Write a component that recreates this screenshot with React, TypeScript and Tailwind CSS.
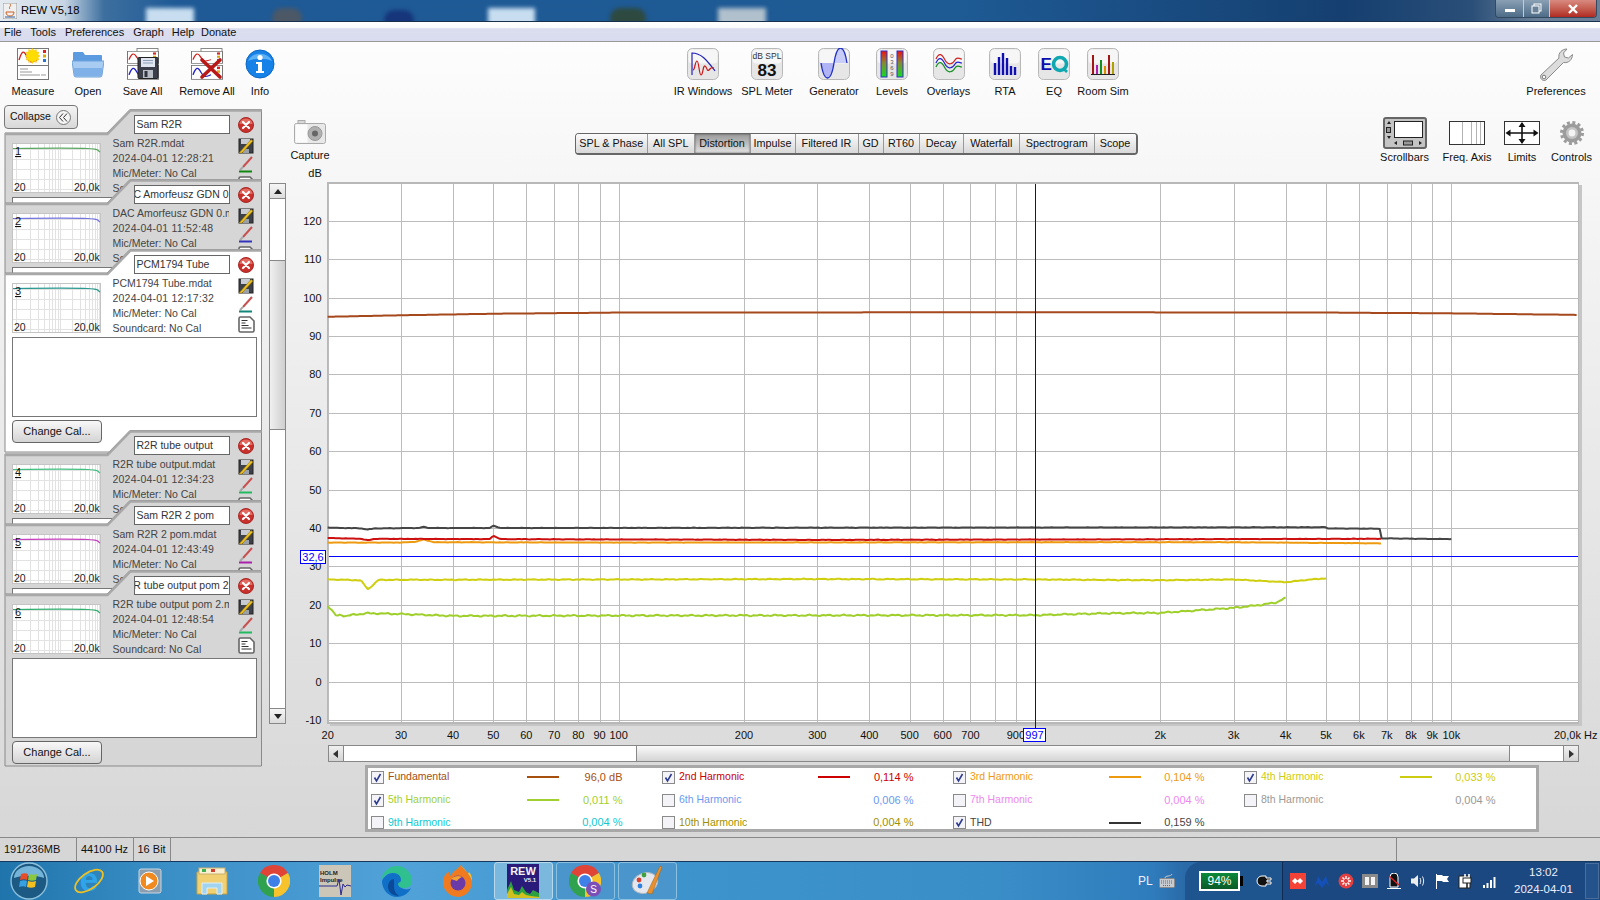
import { ReactNode } from "react";

const fx = (f: number) => 327.7 + 416.3 * Math.log10(f / 20);
const dy = (db: number) => 681.6 - 3.84 * db;

// frequency response style line with a small ripple so it does not look ruled
function curve(points: number[][], amp: number, seed: number) {
  const out: string[] = [];
  const x0 = fx(points[0][0]);
  const x1 = fx(points[points.length - 1][0]);
  let i = 0;
  for (let x = x0; x < x1; x += 2) {
    const f = 20 * Math.pow(10, (x - 327.7) / 416.3);
    while (i < points.length - 2 && points[i + 1][0] < f) i++;
    const [fa, da] = points[i];
    const [fb, db] = points[i + 1];
    const t = Math.min(1, Math.max(0, Math.log(f / fa) / Math.log(fb / fa)));
    const ripple = amp * (Math.sin(x * 0.37 + seed) + Math.sin(x * 0.91 + seed * 2)) * 0.5;
    out.push(`${x.toFixed(1)},${dy(da + (db - da) * t + ripple).toFixed(1)}`);
  }
  out.push(`${x1.toFixed(1)},${dy(points[points.length - 1][1]).toFixed(1)}`);
  return out.join(" ");
}

const traces = [
  { color: "#a5481c", amp: 0, points: [[20, 95], [30, 95.4], [50, 95.8], [100, 96.1], [1000, 96.2], [5000, 96.1], [10000, 95.9], [20000, 95.5]] },
  { color: "#9fcf2b", amp: 0.22, points: [[20, 19.8], [21, 17], [21.5, 17.5], [22, 17], [23, 17.4], [25, 17.8], [30, 17.6], [40, 17.1], [100, 17.2], [1000, 17.3], [1500, 17.8], [2000, 17.9], [3000, 19.2], [3500, 20], [3800, 20.6], [4000, 21.9]] },
  { color: "#cfcf10", amp: 0.12, points: [[20, 26.6], [24, 26.4], [25, 24], [26.5, 26.5], [100, 26.6], [300, 26.7], [1000, 26.6], [2000, 26.4], [3000, 26.6], [4000, 25.9], [4500, 26.5], [5000, 26.9]] },
  { color: "#ee9a10", amp: 0.04, points: [[20, 36.2], [30, 36.2], [32.5, 36.4], [34, 37], [36, 36.3], [100, 36.2], [1000, 36.3], [3000, 36.3], [6780, 36]] },
  { color: "#cc1010", amp: 0.05, points: [[20, 37.4], [24, 37.2], [25, 36.8], [26, 37.2], [49, 37.1], [50, 38], [52, 37.1], [300, 36.9], [1000, 37], [6780, 37.2]] },
  { color: "#454545", amp: 0.05, points: [[20, 40.1], [24, 39.9], [25, 39.6], [26, 39.9], [33, 40], [34, 40.3], [35, 40], [49, 40], [50, 40.6], [52, 40], [5000, 40.2], [5010, 39.9], [6730, 39.8], [6780, 37.3], [10000, 37.1]] },
];

const gridFreqs = [20, 30, 40, 50, 60, 70, 80, 90, 100, 200, 300, 400, 500, 600, 700, 800, 900, 1000, 2000, 3000, 4000, 5000, 6000, 7000, 8000, 9000, 10000];
const freqLabels: [number, string][] = [
  [20, "20"], [30, "30"], [40, "40"], [50, "50"], [60, "60"], [70, "70"], [80, "80"], [90, "90"], [100, "100"],
  [200, "200"], [300, "300"], [400, "400"], [500, "500"], [600, "600"], [700, "700"], [900, "900"],
  [2000, "2k"], [3000, "3k"], [4000, "4k"], [5000, "5k"], [6000, "6k"], [7000, "7k"], [8000, "8k"], [9000, "9k"], [10000, "10k"],
];
const dbTicks = [120, 110, 100, 90, 80, 70, 60, 50, 40, 30, 20, 10, 0, -10];

function Chart() {
  return (
    <svg width={1310} height={580} viewBox="290 165 1310 580" className="block shrink-0 text-[11px]">
      <rect x={330} y={185} width={1252} height={541} fill="#c6c6c6" />
      <rect x={327} y={182} width={1252} height={542} fill="#b8b8b8" />
      <rect x={329} y={184} width={1249} height={538} fill="#ffffff" />
      {dbTicks.map((d) => (
        <g key={d}>
          <line x1={329} x2={1578} y1={Math.round(dy(d)) + 0.5} y2={Math.round(dy(d)) + 0.5} stroke="#bcbcbc" />
          <text x={321.5} y={dy(d) + 4} textAnchor="end" fill="#111">{d}</text>
        </g>
      ))}
      {gridFreqs.map((f) => (
        <line key={f} x1={Math.round(fx(f)) + 0.5} x2={Math.round(fx(f)) + 0.5} y1={184} y2={722} stroke="#bcbcbc" />
      ))}
      <text x={315} y={177} textAnchor="middle" fill="#111">dB</text>
      {freqLabels.map(([f, t]) => (
        <text key={f} x={fx(f)} y={739} textAnchor="middle" fill="#111">{t}</text>
      ))}
      <text x={1554} y={739} fill="#111">20,0k</text>
      <text x={1584} y={739} fill="#111">Hz</text>
      {traces.map((t) => (
        <polyline key={t.color} points={curve(t.points, t.amp, t.points.length)} fill="none" stroke={t.color} strokeWidth={2} strokeLinejoin="round" />
      ))}
      <line x1={329} x2={1578} y1={556.5} y2={556.5} stroke="#0000ff" />
      <line x1={1035.5} x2={1035.5} y1={184} y2={728} stroke="#0000ff" />
      <rect x={300.5} y={550.5} width={25} height={13} fill="#fff" stroke="#0000ff" />
      <text x={313} y={561} textAnchor="middle" fill="#0000ff">32,6</text>
      <rect x={1023.5} y={728.5} width={22} height={13} fill="#fff" stroke="#0000ff" />
      <text x={1034.5} y={739} textAnchor="middle" fill="#0000ff">997</text>
    </svg>
  );
}

function IconFrame({ children }: { children: ReactNode }) {
  return (
    <svg width={32} height={32} viewBox="0 0 32 32">
      <rect x={0.5} y={0.5} width={31} height={31} rx={5} fill="#e6e6e6" stroke="#b8b8b8" />
      <rect x={1.5} y={1.5} width={29} height={14} rx={4} fill="#f6f6f6" />
      {children}
    </svg>
  );
}

function MiniSheet({ stroke }: { stroke: string }) {
  return (
    <g>
      <rect x={0.5} y={0.5} width={31} height={17} fill="#fff" stroke="#777" />
      <path d="M2 12 C5 2 7 2 10 9 S15 14 20 12" fill="none" stroke={stroke} strokeWidth={1.4} />
      <rect x={26} y={2} width={3} height={3} fill="#d22" />
      <rect x={26} y={6.5} width={3} height={3} fill="#da0" />
      <rect x={26} y={11} width={3} height={3} fill="#27c" />
    </g>
  );
}

function burst(cx: number, cy: number, r1: number, r2: number, n: number) {
  const pts: string[] = [];
  for (let i = 0; i < n * 2; i++) {
    const r = i % 2 ? r2 : r1;
    const a = (i * Math.PI) / n;
    pts.push(`${(cx + r * Math.sin(a)).toFixed(1)},${(cy - r * Math.cos(a)).toFixed(1)}`);
  }
  return pts.join(" ");
}

function MeasureIcon() {
  return (
    <svg width={32} height={32} viewBox="0 0 32 32">
      <MiniSheet stroke="#d02020" />
      <rect x={0.5} y={17.5} width={31} height={14} fill="#fff" stroke="#777" />
      <path d="M3 21h8M3 24h12M3 27h20M24 27h5" stroke="#999" />
      <polygon points={burst(15.5, 8, 7.5, 5.5, 12)} fill="#ffdd00" stroke="#f4c000" strokeWidth={0.5} />
    </svg>
  );
}

function OpenIcon() {
  return (
    <svg width={32} height={32} viewBox="0 0 32 32">
      <path d="M1 8V5a1 1 0 0 1 1-1h9l2 3h16a1 1 0 0 1 1 1v6H1z" fill="#5d9be0" />
      <path d="M0 13h32l-2 14a2 2 0 0 1-2 2H4a2 2 0 0 1-2-2z" fill="#a9cdf2" stroke="#6fa3da" />
      <rect x={2} y={20} width={28} height={8} fill="#7fb0e8" />
    </svg>
  );
}

function SaveAllIcon() {
  return (
    <svg width={32} height={32} viewBox="0 0 32 32">
      <rect x={10} y={0.5} width={21} height={10} fill="#fff" stroke="#888" />
      <g transform="translate(0 3) scale(1 .72)">
        <MiniSheet stroke="#d02020" />
      </g>
      <g transform="translate(0 17) scale(1 .82)">
        <MiniSheet stroke="#2020c0" />
      </g>
      <rect x={11} y={9.5} width={20} height={21} rx={1} fill="#3a3f4a" stroke="#222" />
      <rect x={14} y={10} width={14} height={9} fill="#dfe6ef" />
      <path d="M16 12.5h10M16 15h10" stroke="#8da0b8" />
      <rect x={16} y={22} width={10} height={8} fill="#b9bec6" />
      <rect x={17.5} y={23} width={3} height={6} fill="#30343c" />
    </svg>
  );
}

function RemoveAllIcon() {
  return (
    <svg width={32} height={32} viewBox="0 0 32 32">
      <rect x={10} y={0.5} width={21} height={10} fill="#fff" stroke="#888" />
      <g transform="translate(0 3) scale(1 .72)">
        <MiniSheet stroke="#d02020" />
      </g>
      <g transform="translate(0 17) scale(1 .82)">
        <MiniSheet stroke="#2020c0" />
      </g>
      <path d="M11 12l18 17M29 12L11 29" stroke="#b81818" strokeWidth={3.6} strokeLinecap="round" />
    </svg>
  );
}

function InfoIcon() {
  return (
    <svg width={30} height={30} viewBox="0 0 30 30">
      <circle cx={15} cy={15} r={14} fill="#1682e8" stroke="#0d68c4" />
      <path d="M3 12a12.5 10 0 0 1 24 0c-6-3-18-3-24 0z" fill="#5cb0f5" />
      <circle cx={15} cy={8.5} r={2.6} fill="#fff" />
      <path d="M11 13h6v9h2v2h-8v-2h2v-7h-2z" fill="#fff" />
    </svg>
  );
}

function IrIcon() {
  return (
    <IconFrame>
      <path d="M5 27V5c10 0 16 9 23 18" fill="none" stroke="#2222bb" strokeWidth={1.2} />
      <path d="M6 22c2 0 2-9 4-9s2 14 4 14 2-10 4-9 2 6 4 4 2-3 5-2" fill="none" stroke="#c81818" strokeWidth={1.2} />
    </IconFrame>
  );
}

function SplIcon() {
  return (
    <IconFrame>
      <text x={16} y={11} textAnchor="middle" className="text-[8.5px]" fill="#333">dB SPL</text>
      <text x={16} y={28} textAnchor="middle" className="text-[17px] font-bold" fill="#111">83</text>
    </IconFrame>
  );
}

function GeneratorIcon() {
  return (
    <IconFrame>
      <path d="M3 15c3 20 10 20 13 0z" fill="#b0b4f4" />
      <path d="M16 15c3-20 10-20 13 0z" fill="#c8ccf8" />
      <path d="M3 15c3 20 10 20 13 0s10-20 13 0" fill="none" stroke="#2030c0" strokeWidth={1.3} />
    </IconFrame>
  );
}

function LevelsIcon() {
  return (
    <IconFrame>
      <defs>
        <linearGradient id="lv" x1="0" y1="0" x2="0" y2="1">
          <stop offset="0" stopColor="#ee1111" />
          <stop offset="0.45" stopColor="#888833" />
          <stop offset="1" stopColor="#11dd22" />
        </linearGradient>
      </defs>
      <rect x={5} y={3} width={6} height={26} fill="url(#lv)" stroke="#3030c0" />
      <rect x={21} y={3} width={6} height={26} fill="url(#lv)" stroke="#3030c0" />
      <text x={16} y={10} textAnchor="middle" className="text-[6px]" fill="#555">0</text>
      <text x={16} y={16} textAnchor="middle" className="text-[6px]" fill="#555">3</text>
      <text x={16} y={22} textAnchor="middle" className="text-[6px]" fill="#555">6</text>
      <text x={16} y={28} textAnchor="middle" className="text-[6px]" fill="#555">9</text>
    </IconFrame>
  );
}

function OverlaysIcon() {
  return (
    <IconFrame>
      <path d="M3 11c3-7 6-5 9 1s8 4 10 0 4-1 7-1" fill="none" stroke="#d02020" strokeWidth={1.2} />
      <path d="M3 15c3-7 6-5 9 1s8 4 10 0 4-1 7-1" fill="none" stroke="#2020d0" strokeWidth={1.2} />
      <path d="M3 19c3-7 6-5 9 1s8 4 10 0 4-1 7-1" fill="none" stroke="#109020" strokeWidth={1.2} />
    </IconFrame>
  );
}

function RtaIcon() {
  return (
    <IconFrame>
      <path d="M6 27V15M10 27V9M14 27V5M18 27V10M22 27V18M26 27V19" stroke="#1010b0" strokeWidth={2.4} />
    </IconFrame>
  );
}

function EqIcon() {
  return (
    <IconFrame>
      <text x={2.5} y={22} className="text-[17px] font-bold" fill="#0a10b0">E</text>
      <circle cx={22} cy={16} r={6.5} fill="none" stroke="#10a8b0" strokeWidth={3.6} />
      <path d="M25 20l4 4" stroke="#10a8b0" strokeWidth={2.6} />
    </IconFrame>
  );
}

function RoomSimIcon() {
  return (
    <IconFrame>
      <path d="M6 26V7" stroke="#a01515" strokeWidth={2} />
      <path d="M10 26V17" stroke="#b020b0" strokeWidth={2} />
      <path d="M14 26V12" stroke="#109020" strokeWidth={2} />
      <path d="M18 26V18" stroke="#d89000" strokeWidth={2} />
      <path d="M22 26V7" stroke="#a01515" strokeWidth={2} />
      <path d="M26 26V14" stroke="#b0a000" strokeWidth={2} />
      <path d="M4 26.5h24" stroke="#222" />
    </IconFrame>
  );
}

function WrenchIcon() {
  return (
    <svg width={34} height={33} viewBox="0 0 34 33">
      <path d="M2 27L20 10c-1-5 3-9 8-9l-3.5 4 1 4 4 1 4-3.5c0 5-4 9-9 8L7 32c-3 2-7-2-5-5z" fill="#dcdcdc" stroke="#8a8a8a" />
      <circle cx={5} cy={29} r={1.8} fill="#fff" stroke="#777" />
    </svg>
  );
}

function ScrollbarsIcon() {
  return (
    <svg width={44} height={32} viewBox="0 0 44 32">
      <rect x={1} y={1} width={42} height={30} rx={2} fill="#c4c4c4" stroke="#666" strokeWidth={2} />
      <rect x={11.5} y={4.5} width={28} height={16} fill="#fff" stroke="#222" />
      <path d="M4 7l2-3 2 3zM4 19l2 3 2-3z" fill="#222" />
      <rect x={3.5} y={10.5} width={4} height={5} fill="#999" stroke="#222" />
      <path d="M14 24l-3 2 3 2zM36 24l3 2-3 2z" fill="#222" />
      <rect x={20.5} y={24} width={9} height={4} fill="#999" stroke="#222" />
    </svg>
  );
}

function FreqAxisIcon() {
  return (
    <svg width={36} height={24} viewBox="0 0 36 24">
      <rect x={0.5} y={0.5} width={35} height={23} fill="#fff" stroke="#333" />
      <path d="M13.5 1v22M22.5 1v22M27.5 1v22M31.5 1v22" stroke="#b4b4b4" />
    </svg>
  );
}

function LimitsIcon() {
  return (
    <svg width={36} height={24} viewBox="0 0 36 24">
      <rect x={0.5} y={0.5} width={35} height={23} fill="#fff" stroke="#333" />
      <path d="M3 12h30M18 2v20" stroke="#111" strokeWidth={1.6} />
      <path d="M1.500 12l5-3.500v7zM34.500 12l-5-3.500v7zM18 1l-3.500 5h7zM18 23l-3.500-5h7z" fill="#111" />
    </svg>
  );
}

function GearIcon() {
  return (
    <svg width={24} height={24} viewBox="0 0 24 24">
      <circle cx={12} cy={12} r={9.5} fill="#9c9c9c" />
      <circle cx={12} cy={12} r={10.5} fill="none" stroke="#9c9c9c" strokeWidth={3} strokeDasharray="3 2.5" />
      <circle cx={12} cy={12} r={6} fill="#c4c4c4" />
      <circle cx={12} cy={12} r={3.4} fill="#f4f4f4" />
    </svg>
  );
}

function CameraIcon() {
  return (
    <svg width={32} height={24} viewBox="0 0 32 24">
      <rect x={4} y={0.5} width={7} height={4} fill="#d8d8d8" stroke="#aaa" />
      <rect x={0.5} y={3.5} width={31} height={20} rx={2} fill="#e8e8e8" stroke="#aaa" />
      <rect x={1.5} y={4.5} width={12} height={18} fill="#fbfbfb" />
      <circle cx={21} cy={13.5} r={7} fill="#b0b0b0" stroke="#999" />
      <circle cx={21} cy={13.5} r={3} fill="#666" />
    </svg>
  );
}

function ToolItem({ className, label, children }: { className: string; label: string; children: ReactNode }) {
  return (
    <div className={`flex flex-col items-center shrink-0 ${className}`}>
      <div className="h-[32px] flex items-center justify-center">{children}</div>
      <div className="mt-[4px] leading-[14px] text-[11px] text-[#111] whitespace-nowrap">{label}</div>
    </div>
  );
}

function SmallTool({ className, label, children }: { className: string; label: string; children: ReactNode }) {
  return (
    <div className={`flex flex-col items-center shrink-0 pt-[12px] ${className}`}>
      <div className="h-[32px] flex items-center justify-center">{children}</div>
      <div className="mt-[1px] leading-[14px] text-[11px] text-[#111] whitespace-nowrap">{label}</div>
    </div>
  );
}

const tabs = [
  { label: "SPL & Phase", w: "w-[72.5px]" },
  { label: "All SPL", w: "w-[46.5px]" },
  { label: "Distortion", w: "w-[56px]", active: true },
  { label: "Impulse", w: "w-[45px]" },
  { label: "Filtered IR", w: "w-[63px]" },
  { label: "GD", w: "w-[25px]" },
  { label: "RT60", w: "w-[36px]" },
  { label: "Decay", w: "w-[44px]" },
  { label: "Waterfall", w: "w-[56.5px]" },
  { label: "Spectrogram", w: "w-[74.5px]" },
  { label: "Scope", w: "w-[41px]" },
];

function TabBar() {
  return (
    <div className="flex h-[22px] mt-[27.5px] ml-[244.5px] shrink-0 rounded-[4px] border border-[#666] border-r-2 border-b-2 overflow-hidden">
      {tabs.map((t) => (
        <div
          key={t.label}
          className={`${t.w} flex items-center justify-center text-[10.8px] text-[#111] whitespace-nowrap border-r border-[#999] last:border-r-0 ${
            t.active
              ? "bg-gradient-to-b from-[#9a9a9a] to-[#e2e2e2] shadow-[inset_0_0_2px_#444]"
              : "bg-gradient-to-b from-[#fbfbfb] to-[#d8d8d8]"
          }`}
        >
          {t.label}
        </div>
      ))}
    </div>
  );
}

function CloseDot() {
  return (
    <svg width={16} height={16} viewBox="0 0 16 16">
      <circle cx={8} cy={8} r={7.5} fill="#c8302c" stroke="#a82825" />
      <path d="M1.5 7a6.5 5.5 0 0 1 13 0z" fill="#e36a60" />
      <path d="M5 5l6 6M11 5l-6 6" stroke="#fff" strokeWidth={2.2} strokeLinecap="round" />
    </svg>
  );
}

function PenSaveIcon() {
  return (
    <svg width={16} height={16} viewBox="0 0 16 16">
      <rect x={1} y={1} width={14} height={14} fill="#3e4248" stroke="#222" />
      <rect x={3} y={1} width={9} height={5} fill="#c8ccd2" />
      <rect x={5} y={11} width={6} height={4} fill="#9aa0a8" />
      <path d="M1 15L13 1.500 15 3 4 15z" fill="#eec020" stroke="#8a6c10" strokeWidth={0.5} />
    </svg>
  );
}

function BrushIcon({ color }: { color: string }) {
  return (
    <svg width={15} height={17} viewBox="0 0 15 17">
      <path d="M4 11L13 1" stroke="#c85050" strokeWidth={2} />
      <path d="M1 14l3-3" stroke="#a8a8a8" strokeWidth={2} />
      <rect x={0} y={14.5} width={13} height={2} fill={color} />
    </svg>
  );
}

function DocIcon() {
  return (
    <svg width={17} height={17} viewBox="0 0 17 17">
      <path d="M1 2.500A1.500 1.500 0 0 1 2.500 1H12l4 4v9.500a1.500 1.500 0 0 1-1.500 1.500h-12A1.500 1.500 0 0 1 1 14.500z" fill="#fff" stroke="#666" strokeWidth={1.6} />
      <path d="M3.500 4.500h6M3.500 7h4M3.500 9.500h7M3.500 12h10" stroke="#333" />
    </svg>
  );
}

function Thumb({ index, color }: { index: number; color: string }) {
  const lines = [4, 18, 26, 32, 37, 40, 43, 46, 48, 60, 68, 73, 77, 80, 83, 85, 87];
  return (
    <svg width={89} height={50} viewBox="0 0 89 50" className="shrink-0 block">
      <rect x={0.5} y={0.5} width={88} height={49} fill="#fff" stroke="#c4c4c4" />
      {lines.map((x) => (
        <line key={x} x1={x + 0.5} x2={x + 0.5} y1={1} y2={49} stroke="#e2e2e2" />
      ))}
      {[6, 16, 26, 36, 46].map((y) => (
        <line key={y} x1={1} x2={88} y1={y + 0.5} y2={y + 0.5} stroke="#e2e2e2" />
      ))}
      <path d="M1 5.500C40 5 65 5 76 5.500S85 7 88 9" fill="none" stroke={color} strokeWidth={1.2} />
      <text x={3} y={12} className="text-[11px] underline" fill="#111">{index}</text>
      <text x={2} y={48} className="text-[10.5px]" fill="#222">20</text>
      <text x={62} y={48} className="text-[10.5px]" fill="#222">20,0k</text>
    </svg>
  );
}

type PanelProps = {
  index: number;
  name: string;
  file: string;
  date: string;
  color: string;
  under: string;
  open?: boolean;
  selected?: boolean;
};

function Panel({ index, name, file, date, color, under, open, selected }: PanelProps) {
  const h = !open ? 95 : selected ? 205 : 198;
  const fill = selected ? "#ffffff" : "#d6d6d6";
  const size = !open ? "h-[95px] -mb-[25px]" : selected ? "h-[205px] -mb-[24px]" : "h-[198px]";
  return (
    <div className={`relative w-[259px] overflow-hidden ${size}`}>
      <svg width={259} height={h} className="absolute inset-0">
        <path
          d={`M1 ${open ? h - 1 : h + 2}V25H103L126 1.500H257.500V${open ? h - 1 : h + 2}${open ? "Z" : ""}`}
          fill={fill}
          stroke="#8a8a8a"
        />
        <path d="M1 26H103.500L126.500 2.500H257.500" fill="none" stroke="#a8a8a8" strokeWidth={2.5} />
      </svg>
      <div className="relative">
        <div className="h-[28px] pt-[7px] pl-[130px] flex items-start">
          <div className="w-[95.5px] h-[19px] bg-white border border-[#666] flex justify-end items-center overflow-hidden text-[10.5px] text-[#333] whitespace-nowrap">
            <span className={`shrink-0 ${name.length > 15 ? "" : "w-[92px]"}`}>{name}</span>
          </div>
          <div className="ml-[8px] mt-[2px]">
            <CloseDot />
          </div>
        </div>
        <div className="flex items-start h-[60px]">
          <div className="ml-[8px] mt-[7px]">
            <Thumb index={index} color={color} />
          </div>
          <div className="ml-[11.5px] w-[116px] overflow-hidden whitespace-nowrap text-[10.5px] leading-[15px] text-[#444]">
            <div>{file}</div>
            <div className="tracking-[0.22px]">{date}</div>
            <div>Mic/Meter: No Cal</div>
            <div>Soundcard: No Cal</div>
          </div>
          <div className="ml-[9px] mt-[2px] flex flex-col items-center gap-[2px] w-[17px]">
            <PenSaveIcon />
            <BrushIcon color={under} />
            <div className="mt-[1px]">
              <DocIcon />
            </div>
          </div>
        </div>
        <div className="ml-[8px] mt-[1px] w-[245px] h-[80px] bg-white border border-[#777]" />
        {open && (
          <div className="ml-[8px] mt-[3px] w-[90px] h-[23px] rounded-[4px] border border-[#666] bg-gradient-to-b from-[#f8f8f8] to-[#d4d4d4] flex items-center justify-center text-[11px] text-[#111]">
            Change Cal...
          </div>
        )}
      </div>
    </div>
  );
}

const panels: PanelProps[] = [
  { index: 1, name: "Sam R2R", file: "Sam R2R.mdat", date: "2024-04-01 12:28:21", color: "#58a860", under: "#108810" },
  { index: 2, name: "DAC Amorfeusz GDN 0", file: "DAC Amorfeusz GDN 0.mdat", date: "2024-04-01 11:52:48", color: "#7474e0", under: "#3434bb" },
  { index: 3, name: "PCM1794 Tube", file: "PCM1794 Tube.mdat", date: "2024-04-01 12:17:32", color: "#2a9a90", under: "#118877", open: true, selected: true },
  { index: 4, name: "R2R tube output", file: "R2R tube output.mdat", date: "2024-04-01 12:34:23", color: "#40c080", under: "#20bb60" },
  { index: 5, name: "Sam R2R 2 pom", file: "Sam R2R 2 pom.mdat", date: "2024-04-01 12:43:49", color: "#c840c0", under: "#aa22aa" },
  { index: 6, name: "R2R tube output pom 2", file: "R2R tube output pom 2.mdat", date: "2024-04-01 12:48:54", color: "#30b070", under: "#20bb60", open: true },
];

const legend = [
  { label: "Fundamental", value: "96,0 dB", color: "text-[#a5500f]", line: "bg-[#a5500f]", on: true },
  { label: "2nd Harmonic", value: "0,114 %", color: "text-[#cc0000]", line: "bg-[#cc0000]", on: true },
  { label: "3rd Harmonic", value: "0,104 %", color: "text-[#ee9a10]", line: "bg-[#ee9a10]", on: true },
  { label: "4th Harmonic", value: "0,033 %", color: "text-[#cccc10]", line: "bg-[#cccc10]", on: true },
  { label: "5th Harmonic", value: "0,011 %", color: "text-[#9fd030]", line: "bg-[#9fd030]", on: true },
  { label: "6th Harmonic", value: "0,006 %", color: "text-[#6a9af0]", line: "", on: false },
  { label: "7th Harmonic", value: "0,004 %", color: "text-[#ee88ee]", line: "", on: false },
  { label: "8th Harmonic", value: "0,004 %", color: "text-[#999999]", line: "", on: false },
  { label: "9th Harmonic", value: "0,004 %", color: "text-[#10c8d0]", line: "", on: false },
  { label: "10th Harmonic", value: "0,004 %", color: "text-[#a09000]", line: "", on: false },
  { label: "THD", value: "0,159 %", color: "text-[#444444]", line: "bg-[#333333]", on: true },
];

function CheckBox({ on }: { on: boolean }) {
  return (
    <svg width={13} height={13} viewBox="0 0 13 13" className="shrink-0">
      <rect x={0.5} y={0.5} width={12} height={12} fill="#f4f4f8" stroke="#8a8a8a" />
      {on && <path d="M3.500 6.500l2 3.500 4-7" fill="none" stroke="#2c3a90" strokeWidth={1.6} />}
    </svg>
  );
}

function Legend() {
  return (
    <div className="ml-[75px] mt-[3px] w-[1174px] h-[67px] bg-white border-[3px] border-[#a8a8a8] pl-[3px] text-[10.5px] shrink-0">
      <div className="-mt-[2px] grid grid-cols-[repeat(4,291px)] grid-rows-[repeat(3,22.7px)]">
        {legend.map((l) => (
          <div key={l.label} className="flex items-center">
            <CheckBox on={l.on} />
            <span className={`${l.color} ml-[4px] w-[139px]`}>{l.label}</span>
            <span className={`w-[32px] h-[2px] ${l.line}`} />
            <span className={`${l.color} w-[63.5px] text-right text-[11px]`}>{l.value}</span>
          </div>
        ))}
      </div>
    </div>
  );
}

function HScroll() {
  return (
    <div className="ml-[37.5px] w-[1251px] h-[17px] flex border border-[#888] bg-white shrink-0">
      <div className="w-[15px] bg-gradient-to-b from-[#f0f0f0] to-[#d4d4d4] border-r border-[#888] flex items-center justify-center">
        <svg width={6} height={8} viewBox="0 0 6 8"><path d="M5 0v8L0 4z" fill="#333" /></svg>
      </div>
      <div className="w-[292px]" />
      <div className="flex-1 bg-gradient-to-b from-[#fafafa] to-[#d4d4d4] border-x border-[#888]" />
      <div className="w-[53px]" />
      <div className="w-[15px] bg-gradient-to-b from-[#f0f0f0] to-[#d4d4d4] border-l border-[#888] flex items-center justify-center">
        <svg width={6} height={8} viewBox="0 0 6 8"><path d="M1 0v8l5-4z" fill="#333" /></svg>
      </div>
    </div>
  );
}

function VScroll() {
  return (
    <div className="ml-[6px] mt-[78px] w-[17px] h-[541px] border border-[#888] bg-white flex flex-col shrink-0">
      <div className="h-[15px] bg-gradient-to-b from-[#f6f6f6] to-[#dcdcdc] border-b border-[#888] flex items-center justify-center">
        <svg width={8} height={5} viewBox="0 0 8 5"><path d="M0 5h8L4 0z" fill="#222" /></svg>
      </div>
      <div className="h-[61px]" />
      <div className="h-[170px] bg-gradient-to-r from-[#f0f0f0] to-[#cfcfcf] border-y border-[#888]" />
      <div className="flex-1" />
      <div className="h-[15px] bg-gradient-to-b from-[#f6f6f6] to-[#dcdcdc] border-t border-[#888] flex items-center justify-center">
        <svg width={8} height={5} viewBox="0 0 8 5"><path d="M0 0h8L4 5z" fill="#222" /></svg>
      </div>
    </div>
  );
}

function ChromeLogo({ badge }: { badge?: boolean }) {
  return (
    <svg width={32} height={32} viewBox="0 0 32 32">
      <path d="M16 16L2.100 8A16 16 0 0 1 29.900 8z" fill="#e04437" />
      <path d="M16 16L29.900 8A16 16 0 0 1 16 32z" fill="#f7c32c" />
      <path d="M16 16L16 32A16 16 0 0 1 2.100 8z" fill="#30a24f" />
      <circle cx={16} cy={16} r={7.6} fill="#fff" />
      <circle cx={16} cy={16} r={6} fill="#3f7fe8" />
      {badge && (
        <g>
          <circle cx={24.5} cy={24} r={7.5} fill="#7a50b8" />
          <text x={24.5} y={27.5} textAnchor="middle" className="text-[10px]" fill="#fff">S</text>
        </g>
      )}
    </svg>
  );
}

function WinOrb() {
  return (
    <svg width={38} height={38} viewBox="0 0 38 38">
      <circle cx={19} cy={19} r={18} fill="#1c5a84" stroke="#8cc0dc" strokeWidth={1.4} />
      <path d="M4 16a15 12 0 0 1 30 0c-8-3-22-3-30 0z" fill="#74b4d8" />
      <path d="M11 12c3-1 5-1 7 0l-1 6c-2-1-4-1-7 0z" fill="#e84c28" />
      <path d="M19 12c3 1 5 1 8 0l-1 6c-3 1-5 1-8 0z" fill="#8cc83c" />
      <path d="M10 19c3-1 5-1 7 0l-1 6c-2-1-4-1-7 0z" fill="#38a0e0" />
      <path d="M18 19c3 1 5 1 8 0l-1 6c-3 1-5 1-8 0z" fill="#f4c020" />
    </svg>
  );
}

function IeLogo() {
  return (
    <svg width={32} height={34} viewBox="0 0 32 34">
      <text x={16} y={27} textAnchor="middle" className="text-[34px] font-bold" fill="#30a4e8">e</text>
      <ellipse cx={16} cy={17} rx={16} ry={8} transform="rotate(-35 16 17)" fill="none" stroke="#f0c020" strokeWidth={1.8} />
    </svg>
  );
}

function MediaLogo() {
  return (
    <svg width={28} height={30} viewBox="0 0 28 30">
      <rect x={3} y={3} width={22} height={24} rx={2} fill="#8a9eb0" stroke="#c8d6e0" />
      <circle cx={13} cy={15} r={9} fill="#f08a20" stroke="#fff" />
      <path d="M10 10l8 5-8 5z" fill="#fff" />
    </svg>
  );
}

function FolderLogo() {
  return (
    <svg width={32} height={30} viewBox="0 0 32 30">
      <path d="M1 6h30v22H1z" fill="#f0d070" stroke="#c8a040" />
      <rect x={3} y={2} width={26} height={6} fill="#f8f0d0" stroke="#c8b070" />
      <rect x={6} y={3} width={4} height={3} fill="#40b050" />
      <rect x={15} y={3} width={4} height={3} fill="#d04030" />
      <path d="M6 28V17h20v11h-5v-6H11v6z" fill="#a0d4f0" stroke="#e0f0f8" />
    </svg>
  );
}

function HolmLogo() {
  return (
    <svg width={32} height={32} viewBox="0 0 32 32">
      <rect width={32} height={32} fill="#cbc6b8" />
      <text x={1} y={10} className="text-[6px] font-bold" fill="#222">HOLM</text>
      <text x={1} y={17} className="text-[6px] font-bold" fill="#222">Impulse</text>
      <path d="M0 21h18l2-7 2 16 2-11 2 3 2-2 4 1" fill="none" stroke="#2a2a90" />
    </svg>
  );
}

function EdgeLogo() {
  return (
    <svg width={32} height={32} viewBox="0 0 32 32">
      <path d="M16 1a15 15 0 0 1 15 15c0 5-4 7-8 7-5 0-7-2-7-4 0-2 3-1 3-4 0-4-3-7-8-7-6 0-10 5-11 8C1 7 8 1 16 1z" fill="#30c090" />
      <path d="M1 16c1-3 5-8 11-8 5 0 8 3 8 7 0 3-3 2-3 4 0 2 2 4 6 5 3 1 6 0 7-1-2 5-8 9-14 9C8 32 1 25 1 16z" fill="#1070c8" />
      <path d="M13 14c-3 0-6 3-6 8 0 5 5 9 11 9-3-2-5-5-5-9z" fill="#0a4a98" />
    </svg>
  );
}

function FirefoxLogo() {
  return (
    <svg width={32} height={34} viewBox="0 0 32 34">
      <path d="M16 33a15 15 0 0 1-15-15C1 13 4 9 7 8c0 2 1 3 2 4 2-6 7-6 9-11 3 3 10 9 12 16a15 15 0 0 1-14 16z" fill="#f07a20" />
      <path d="M18 1c3 3 10 9 12 16 0-4-1-7-3-9l-1 2c-2-4-5-7-8-9z" fill="#fcc030" />
      <circle cx={16} cy={19} r={7.5} fill="#6a3aa8" />
      <path d="M9 15c3-3 8-4 11-2-2 1-4 2-5 4z" fill="#f4a030" />
    </svg>
  );
}

function RewLogo() {
  return (
    <svg width={32} height={34} viewBox="0 0 32 34">
      <rect width={32} height={34} fill="#2a1a7a" />
      <text x={16} y={11} textAnchor="middle" className="text-[11px] font-bold" fill="#f4f4f4">REW</text>
      <text x={23} y={18} textAnchor="middle" className="text-[6px] font-bold" fill="#f4f4f4">V5.1</text>
      <path d="M0 34V26l4-9 3 9 5 2 3-6 4 6 4 2 3-4 6 3v5z" fill="#2ca040" />
      <path d="M0 34v-4l4-7 3 7 5 1 3-3 4 3 5 1 8 1v1z" fill="#d0c020" />
    </svg>
  );
}

function PaintLogo() {
  return (
    <svg width={32} height={32} viewBox="0 0 32 32">
      <ellipse cx={14} cy={18} rx={13} ry={10} fill="#e4e8ee" stroke="#b0b8c0" transform="rotate(-20 14 18)" />
      <circle cx={8} cy={15} r={2.4} fill="#d84030" />
      <circle cx={13} cy={10} r={2.4} fill="#40a040" />
      <circle cx={9} cy={21} r={2.4} fill="#3080e0" />
      <path d="M16 28L29 1l2 1-10 27z" fill="#e89030" stroke="#a06010" strokeWidth={0.5} />
    </svg>
  );
}

function TrayIcons() {
  return (
    <div className="flex items-center w-[216px] h-full shrink-0 ml-[3px]">
      <div className="w-[24px] flex justify-center">
        <svg width={16} height={16} viewBox="0 0 16 16"><rect width={16} height={16} fill="#f44336" /><path d="M2 8l3-3 3 3-3 3zM7 8l3-3 3 3-3 3z" fill="#fff" /></svg>
      </div>
      <div className="w-[24px] flex justify-center">
        <svg width={16} height={16} viewBox="0 0 16 16"><path d="M1 13L4 3l4 6 4-6 3 10-3-3-4 5-4-5z" fill="#1450b8" /></svg>
      </div>
      <div className="w-[24px] flex justify-center">
        <svg width={16} height={16} viewBox="0 0 16 16"><circle cx={8} cy={8} r={7.5} fill="#e24040" /><path d="M8 3v3M8 10v3M3 8h3M10 8h3M4.500 4.500l2 2M9.500 9.500l2 2M11.500 4.500l-2 2M6.500 9.500l-2 2" stroke="#fff" strokeWidth={1.4} /></svg>
      </div>
      <div className="w-[24px] flex justify-center">
        <svg width={16} height={14} viewBox="0 0 16 14"><rect width={16} height={14} fill="#8a8a8a" /><rect x={3} y={3} width={4} height={8} fill="#f4f4f4" /><rect x={9} y={3} width={4} height={8} fill="#f4f4f4" /></svg>
      </div>
      <div className="w-[24px] flex justify-center">
        <svg width={16} height={16} viewBox="0 0 16 16"><path d="M1 15.500h14" stroke="#fff" /><path d="M4 14V4a4 4 0 0 1 8 0v10z" fill="#111" stroke="#fff" /><path d="M3 3l10 9" stroke="#e02020" strokeWidth={1.4} /></svg>
      </div>
      <div className="w-[24px] flex justify-center">
        <svg width={16} height={16} viewBox="0 0 16 16"><path d="M1 5.500h3L8 2v12L4 10.500H1z" fill="#eee" /><path d="M10 5c1 2 1 4 0 6M12.500 3.500c1.500 3 1.500 6 0 9" fill="none" stroke="#eee" /></svg>
      </div>
      <div className="w-[24px] flex justify-center">
        <svg width={16} height={16} viewBox="0 0 16 16"><path d="M2.500 1v15" stroke="#fff" /><path d="M3 2h5l1 1h6l-2 3 2 3H9L8 8H3z" fill="#fff" /></svg>
      </div>
      <div className="w-[24px] flex justify-center">
        <svg width={16} height={16} viewBox="0 0 16 16"><rect x={1} y={3} width={11} height={12} fill="#fff" stroke="#222" /><path d="M7 1v4M11 1v4" stroke="#fff" strokeWidth={1.6} /><rect x={5} y={5} width={8} height={5} fill="#fff" stroke="#222" /><path d="M9 10v5" stroke="#222" strokeWidth={1.6} /></svg>
      </div>
      <div className="w-[24px] flex justify-center">
        <svg width={16} height={14} viewBox="0 0 16 14"><path d="M1 11h2v3H1zM4.500 9h2v5h-2zM8 6h2v8H8zM11.500 3h2v11h-2z" fill="#fff" /></svg>
      </div>
    </div>
  );
}

export default function App() {
  return (
    <div className="w-[1600px] h-[900px] overflow-hidden flex flex-col [font-family:'Liberation_Sans',sans-serif]">
      <div className="relative h-[22px] shrink-0 flex items-center overflow-hidden border-b border-[#18304e] bg-[linear-gradient(90deg,#e4eaf0_0%,#c8d6e4_4%,#3d6f9f_6.5%,#1f5a96_11%,#1e5a94_60%,#153f70_84%,#2a4f78_92%,#6a8098_96%)]">
        <div className="absolute left-[146px] top-[8px] w-[48px] h-[20px] bg-[#c8def0] blur-[2px]" />
        <div className="absolute left-[272px] top-[8px] w-[30px] h-[20px] rounded-full bg-[#4c5866] blur-[2px]" />
        <div className="absolute left-[384px] top-[10px] w-[30px] h-[20px] rounded-full bg-[#16357a] blur-[2px]" />
        <div className="absolute left-[488px] top-[8px] w-[47px] h-[20px] bg-[#c8def0] blur-[2px]" />
        <div className="absolute left-[610px] top-[8px] w-[36px] h-[20px] rounded-full bg-[#2e4a40] blur-[2px]" />
        <div className="absolute left-[718px] top-[8px] w-[48px] h-[20px] bg-[#b0c0cc] blur-[2px]" />
        <svg width={14} height={16} viewBox="0 0 14 16" className="relative ml-[3px]">
          <rect width={14} height={16} fill="#f0f0f0" stroke="#999" />
          <path d="M7 1c2 2-2 3 0 5M3 9h8c0 3-2 4-4 4s-4-1-4-4z" fill="none" stroke="#d06020" />
          <path d="M2 14h10" stroke="#3060a0" />
        </svg>
        <span className="relative ml-[4px] text-[11.2px] text-black">REW V5,18</span>
        <div className="relative ml-auto flex h-[18px] self-start mr-[3px] rounded-b-[4px] border border-t-0 border-[#33495f] overflow-hidden">
          <div className="w-[28px] bg-gradient-to-b from-[#8aa0b4] to-[#4e6c88] border-r border-[#c0ccd8] flex items-center justify-center">
            <div className="w-[10px] h-[3px] bg-white mt-[4px]" />
          </div>
          <div className="w-[26px] bg-gradient-to-b from-[#8aa0b4] to-[#4e6c88] border-r border-[#c0ccd8] flex items-center justify-center">
            <svg width={11} height={11} viewBox="0 0 11 11"><rect x={3} y={1} width={7} height={7} fill="none" stroke="#fff" /><rect x={1} y={3} width={7} height={7} fill="#6a8298" stroke="#fff" /></svg>
          </div>
          <div className="w-[46px] bg-gradient-to-b from-[#d88a80] to-[#b02820] flex items-center justify-center">
            <svg width={12} height={10} viewBox="0 0 12 10"><path d="M2 1l8 8M10 1L2 9" stroke="#fff" strokeWidth={2.4} /></svg>
          </div>
        </div>
      </div>

      <div className="h-[20px] shrink-0 flex items-end pl-[4px] pb-[1px] border-b border-[#999] text-[11px] text-[#111] bg-[linear-gradient(180deg,#ffffff_0%,#fbfbfd_30%,#dadeef_35%,#d8dcee_100%)]">
        <span>File</span>
        <span className="ml-[8.5px]">Tools</span>
        <span className="ml-[9px]">Preferences</span>
        <span className="ml-[9px]">Graph</span>
        <span className="ml-[8px]">Help</span>
        <span className="ml-[6.5px]">Donate</span>
      </div>

      <div className="flex-1 flex flex-col min-h-0 bg-gradient-to-b from-[#fdfdfd] to-[#d6d6d6]">
        <div className="h-[63px] shrink-0 flex pt-[6px] pl-[3px]">
          <ToolItem className="w-[60px]" label="Measure"><MeasureIcon /></ToolItem>
          <ToolItem className="w-[50px]" label="Open"><OpenIcon /></ToolItem>
          <ToolItem className="w-[59px]" label="Save All"><SaveAllIcon /></ToolItem>
          <ToolItem className="w-[70px]" label="Remove All"><RemoveAllIcon /></ToolItem>
          <ToolItem className="w-[36px]" label="Info"><InfoIcon /></ToolItem>
          <ToolItem className="w-[64px] ml-[393px]" label="IR Windows"><IrIcon /></ToolItem>
          <ToolItem className="w-[64px]" label="SPL Meter"><SplIcon /></ToolItem>
          <ToolItem className="w-[70px]" label="Generator"><GeneratorIcon /></ToolItem>
          <ToolItem className="w-[46px]" label="Levels"><LevelsIcon /></ToolItem>
          <ToolItem className="w-[67px]" label="Overlays"><OverlaysIcon /></ToolItem>
          <ToolItem className="w-[46px]" label="RTA"><RtaIcon /></ToolItem>
          <ToolItem className="w-[52px]" label="EQ"><EqIcon /></ToolItem>
          <ToolItem className="w-[46px]" label="Room Sim"><RoomSimIcon /></ToolItem>
          <ToolItem className="w-[64px] ml-auto mr-[12px]" label="Preferences"><WrenchIcon /></ToolItem>
        </div>

        <div className="flex-1 flex min-h-0">
          <div className="w-[290px] shrink-0 flex">
            <div className="w-[263px] shrink-0 pl-[4px]">
              <div className="relative z-10 w-[74px] h-[24px] rounded-[4px] border border-[#777] bg-gradient-to-b from-[#f4f4f4] to-[#d8d8d8] flex items-center justify-between pl-[5px] pr-[6px] text-[10.5px] text-[#111]">
                Collapse
                <svg width={15} height={15} viewBox="0 0 15 15">
                  <circle cx={7.5} cy={7.5} r={7} fill="#f4f4f4" stroke="#777" />
                  <path d="M7 3.500L3.500 7.500 7 11.500M11 3.500L7.500 7.500 11 11.500" fill="none" stroke="#333" />
                </svg>
              </div>
              <div className="-mt-[21px]">
                {panels.map((p) => (
                  <Panel key={p.index} {...p} />
                ))}
              </div>
            </div>
            <VScroll />
          </div>

          <div className="flex-1 flex flex-col min-w-0">
            <div className="h-[60px] shrink-0 flex items-start">
              <div className="w-[40px] shrink-0 pt-[15px] flex flex-col items-center">
                <CameraIcon />
                <div className="mt-[4px] leading-[14px] text-[11px] text-[#111]">Capture</div>
              </div>
              <TabBar />
              <div className="ml-auto mr-[6px] flex">
                <SmallTool className="w-[69px]" label="Scrollbars"><ScrollbarsIcon /></SmallTool>
                <SmallTool className="w-[56px]" label="Freq. Axis"><FreqAxisIcon /></SmallTool>
                <SmallTool className="w-[54px]" label="Limits"><LimitsIcon /></SmallTool>
                <SmallTool className="w-[45px]" label="Controls"><GearIcon /></SmallTool>
              </div>
            </div>
            <Chart />
            <HScroll />
            <Legend />
          </div>
        </div>

        <div className="h-[24px] shrink-0 flex border-t border-[#888] bg-[#d6d6d6] text-[11px] text-[#111]">
          <div className="w-[77px] pl-[4px] border-r border-[#888] flex items-center">191/236MB</div>
          <div className="w-[56.5px] pl-[4px] border-r border-[#888] flex items-center">44100 Hz</div>
          <div className="w-[37px] pl-[4px] border-r border-[#888] flex items-center">16 Bit</div>
          <div className="ml-[1225px] border-l border-[#888]" />
        </div>
      </div>

      <div className="h-[39px] shrink-0 flex items-center border-t border-[#16375e] bg-[linear-gradient(90deg,#1f74ac_0%,#3a8ec6_10%,#50a2d8_25%,#3d94cc_42%,#3a8ec8_62%,#2f7cbc_72%,#2a6aa8_74%)] text-white">
        <div className="w-[58px] shrink-0 flex justify-center"><WinOrb /></div>
        <div className="w-[61.6px] shrink-0 flex justify-center"><IeLogo /></div>
        <div className="w-[61.6px] shrink-0 flex justify-center"><MediaLogo /></div>
        <div className="w-[61.6px] shrink-0 flex justify-center"><FolderLogo /></div>
        <div className="w-[61.6px] shrink-0 flex justify-center"><ChromeLogo /></div>
        <div className="w-[61.6px] shrink-0 flex justify-center"><HolmLogo /></div>
        <div className="w-[61.6px] shrink-0 flex justify-center"><EdgeLogo /></div>
        <div className="w-[61.6px] shrink-0 flex justify-center"><FirefoxLogo /></div>
        <div className="ml-[4.6px] w-[59px] h-full shrink-0 flex items-center justify-center rounded-[3px] border border-[#b8d8ec] bg-[#7ab8de]"><RewLogo /></div>
        <div className="ml-[3px] w-[59px] h-full shrink-0 flex items-center justify-center rounded-[3px] border border-[#8cc0e0] bg-[#4a96cc]"><ChromeLogo badge /></div>
        <div className="ml-[3px] w-[59px] h-full shrink-0 flex items-center justify-center rounded-[3px] border border-[#8cc0e0] bg-[#4a96cc]"><PaintLogo /></div>

        <div className="ml-auto flex items-center h-full shrink-0">
          <span className="w-[17px] text-[12px] text-[#eef]">PL</span>
          <svg width={16} height={14} viewBox="0 0 16 14" className="ml-[4px] mr-[10px]">
            <path d="M6 4c0-3 6-1 7-4" fill="none" stroke="#ccc" />
            <rect x={0.5} y={4.5} width={15} height={9} rx={1} fill="#c8ccd0" stroke="#888" />
            <path d="M2 7h12M2 9h12M4 11.500h8" stroke="#666" strokeDasharray="1 1" />
          </svg>
          <div className="w-[98px] h-full shrink-0 flex items-center rounded-tl-[16px] border-r border-[#102c54] bg-[#1f558f] pl-[14px]">
            <div className="w-[41px] h-[20px] border-2 border-white bg-gradient-to-b from-[#0c8a3a] to-[#0a5a28] flex items-center justify-center text-[12px] text-white">94%</div>
            <div className="w-[3px] h-[10px] bg-black" />
            <svg width={16} height={12} viewBox="0 0 16 12" className="ml-[13px]"><path d="M15 3H10V1H6a5 5 0 0 0 0 10h4V9h5V7h-4V5h4z" fill="#111" stroke="#fff" /></svg>
          </div>
          <div className="h-full flex items-center bg-[#1b4880]">
            <TrayIcons />
            <div className="w-[83px] shrink-0 flex flex-col items-center text-[11.5px] leading-[17px] text-[#eef]">
              <span>13:02</span>
              <span>2024-04-01</span>
            </div>
            <div className="w-[14px] h-[36px] mr-[1px] border border-[#4a6e9c] bg-[#24538c]" />
          </div>
        </div>
      </div>
    </div>
  );
}
